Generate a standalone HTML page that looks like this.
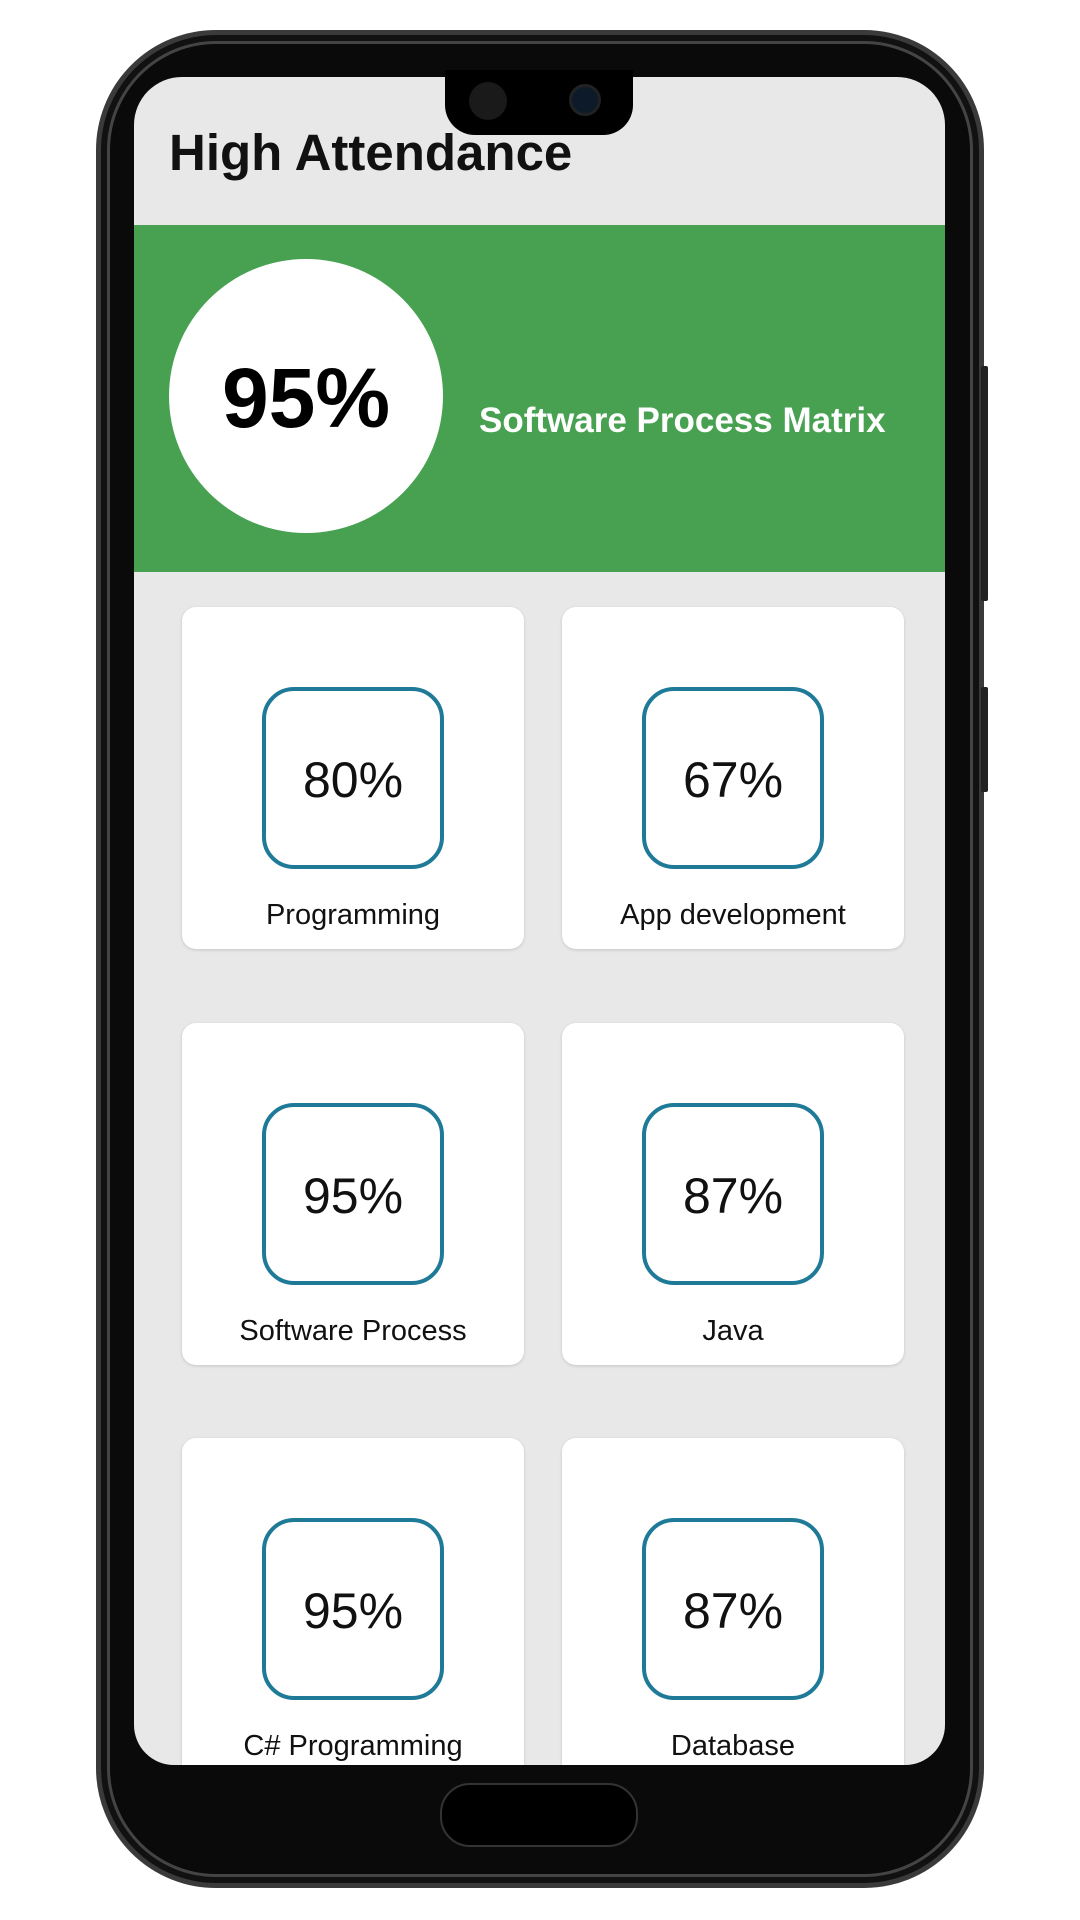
<!DOCTYPE html>
<html><head><meta charset="utf-8"><style>
*{margin:0;padding:0;box-sizing:border-box}
body{width:1080px;height:1920px;background:#fff;position:relative;overflow:hidden;font-family:"Liberation Sans",sans-serif}
.phone{position:absolute;left:96px;top:30px;width:888px;height:1858px;background:#0a0a0a;border-radius:120px;border:5px solid #3a3a3a;box-shadow:inset 0 0 0 6px #111,inset 0 0 0 9px #444}
.btn{position:absolute;left:981px;width:7px;background:#222;border-radius:2px}
.screen{position:absolute;left:134px;top:77px;width:811px;height:1688px;background:#e8e8e8;border-radius:48px 48px 40px 40px;overflow:hidden}
.notch{position:absolute;left:445px;top:70px;width:188px;height:65px;background:#000;border-radius:0 0 30px 30px}
.title{position:absolute;left:35px;top:46px;font-size:51px;font-weight:bold;color:#111}
.green{position:absolute;left:0;top:148px;width:811px;height:347px;background:#48a151}
.circle{position:absolute;left:35px;top:34px;width:274px;height:274px;border-radius:50%;background:#fff;display:flex;align-items:center;justify-content:center;font-size:84px;font-weight:bold;color:#000;padding-top:4px}
.gt{position:absolute;left:345px;top:176px;font-size:35px;font-weight:bold;color:#fff}
.card{position:absolute;width:342px;height:342px;background:#fff;border-radius:14px;box-shadow:0 1px 3px rgba(0,0,0,.15)}
.box{position:absolute;left:80px;top:80px;width:182px;height:182px;border:4px solid #1f7a98;border-radius:32px;display:flex;align-items:center;justify-content:center;font-size:50px;color:#111;padding-top:4px}
.lbl{position:absolute;left:0;width:100%;top:292px;text-align:center;font-size:29px;color:#111}
.home{position:absolute;left:440px;top:1783px;width:198px;height:64px;border:2px solid #333;border-radius:30px;background:#000}
</style></head><body>
<div class="phone"></div>
<div class="btn" style="top:366px;height:235px"></div>
<div class="btn" style="top:687px;height:105px"></div>
<div class="screen">
<div class="title">High Attendance</div>
<div class="green"><div class="circle">95%</div><div class="gt">Software Process Matrix</div></div>
<div class="card" style="left:48px;top:530px"><div class="box">80%</div><div class="lbl">Programming</div></div>
<div class="card" style="left:428px;top:530px"><div class="box">67%</div><div class="lbl">App development</div></div>
<div class="card" style="left:48px;top:946px"><div class="box">95%</div><div class="lbl">Software Process</div></div>
<div class="card" style="left:428px;top:946px"><div class="box">87%</div><div class="lbl">Java</div></div>
<div class="card" style="left:48px;top:1361px"><div class="box">95%</div><div class="lbl">C# Programming</div></div>
<div class="card" style="left:428px;top:1361px"><div class="box">87%</div><div class="lbl">Database</div></div>
</div>
<div class="notch"><div style="position:absolute;left:24px;top:12px;width:38px;height:38px;border-radius:50%;background:#1a1a1a"></div><div style="position:absolute;left:124px;top:14px;width:32px;height:32px;border-radius:50%;background:#0d1a2a;border:3px solid #222"></div></div>
<div class="home"></div>
</body></html>
